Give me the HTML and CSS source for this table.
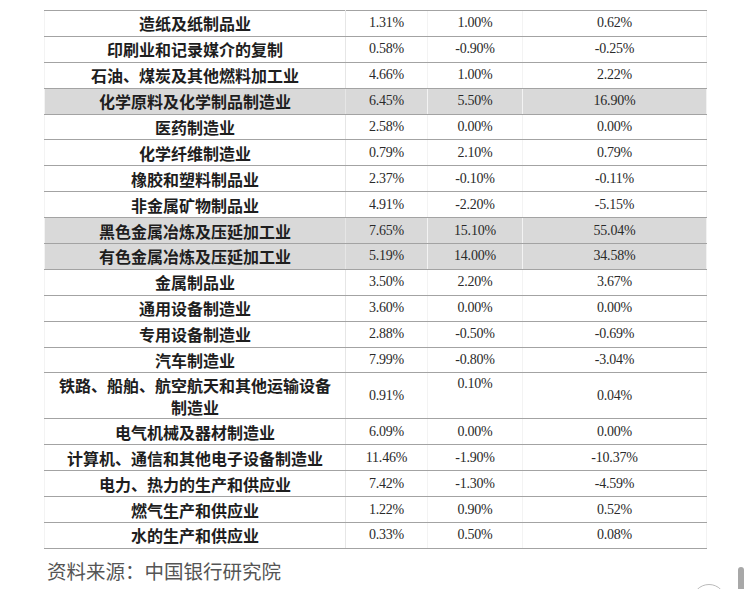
FILE: index.html
```html
<!DOCTYPE html>
<html lang="zh">
<head>
<meta charset="utf-8">
<link rel="stylesheet" href="styles.css">
</head>
<body>
<div class="page">
  <table class="data">
    <colgroup>
      <col class="c1"><col class="c2"><col class="c3"><col class="c4">
    </colgroup>
    <tbody>
      <tr><td class="name">造纸及纸制品业</td><td>1.31%</td><td>1.00%</td><td>0.62%</td></tr>
      <tr><td class="name">印刷业和记录媒介的复制</td><td>0.58%</td><td>-0.90%</td><td>-0.25%</td></tr>
      <tr><td class="name">石油、煤炭及其他燃料加工业</td><td>4.66%</td><td>1.00%</td><td>2.22%</td></tr>
      <tr class="hl"><td class="name">化学原料及化学制品制造业</td><td>6.45%</td><td>5.50%</td><td>16.90%</td></tr>
      <tr><td class="name">医药制造业</td><td>2.58%</td><td>0.00%</td><td>0.00%</td></tr>
      <tr><td class="name">化学纤维制造业</td><td>0.79%</td><td>2.10%</td><td>0.79%</td></tr>
      <tr><td class="name">橡胶和塑料制品业</td><td>2.37%</td><td>-0.10%</td><td>-0.11%</td></tr>
      <tr><td class="name">非金属矿物制品业</td><td>4.91%</td><td>-2.20%</td><td>-5.15%</td></tr>
      <tr class="hl"><td class="name">黑色金属冶炼及压延加工业</td><td>7.65%</td><td>15.10%</td><td>55.04%</td></tr>
      <tr class="hl"><td class="name">有色金属冶炼及压延加工业</td><td>5.19%</td><td>14.00%</td><td>34.58%</td></tr>
      <tr><td class="name">金属制品业</td><td>3.50%</td><td>2.20%</td><td>3.67%</td></tr>
      <tr><td class="name">通用设备制造业</td><td>3.60%</td><td>0.00%</td><td>0.00%</td></tr>
      <tr><td class="name">专用设备制造业</td><td>2.88%</td><td>-0.50%</td><td>-0.69%</td></tr>
      <tr><td class="name">汽车制造业</td><td>7.99%</td><td>-0.80%</td><td>-3.04%</td></tr>
      <tr class="tall"><td class="name">铁路、船舶、航空航天和其他运输设备<br>制造业</td><td>0.91%</td><td class="top">0.10%</td><td>0.04%</td></tr>
      <tr><td class="name">电气机械及器材制造业</td><td>6.09%</td><td>0.00%</td><td>0.00%</td></tr>
      <tr><td class="name">计算机、通信和其他电子设备制造业</td><td>11.46%</td><td>-1.90%</td><td>-10.37%</td></tr>
      <tr><td class="name">电力、热力的生产和供应业</td><td>7.42%</td><td>-1.30%</td><td>-4.59%</td></tr>
      <tr><td class="name">燃气生产和供应业</td><td>1.22%</td><td>0.90%</td><td>0.52%</td></tr>
      <tr><td class="name">水的生产和供应业</td><td>0.33%</td><td>0.50%</td><td>0.08%</td></tr>
    </tbody>
  </table>
  <p class="source">资料来源：中国银行研究院</p>
</div>
<div class="fab"></div>
<div class="scrollbar"></div>
</body>
</html>
```
FILE: styles.css
```css
html, body {
  margin: 0;
  padding: 0;
  background: #fff;
}
body {
  width: 750px;
  height: 589px;
  overflow: hidden;
  position: relative;
}
.page {
  padding: 10px 0 0 44px;
}
.data {
  border-collapse: collapse;
  width: 662px;
  table-layout: fixed;
  border-left: 1px solid #f2f2f2;
  border-right: 1px solid #f2f2f2;
}
.c1 { width: 301px; }
.c2 { width: 82px; }
.c3 { width: 95px; }
.c4 { width: 184px; }
.data tr {
  height: 25.9px;
}
.data tr.tall {
  height: 46px;
}
.data td {
  border-top: 1px solid #a3a3a3;
  border-bottom: 1px solid #a3a3a3;
  border-left: 1px solid #f3f3f3;
  padding: 0;
  text-align: center;
  vertical-align: middle;
  font-family: "Liberation Serif", "Times New Roman", serif;
  font-size: 14px;
  line-height: 18px;
  color: #2a2a2a;
  letter-spacing: -0.2px;
}
.data td.name {
  font-family: "Noto Sans CJK SC", "Noto Sans", sans-serif;
  font-weight: 700;
  font-size: 16px;
  line-height: 20px;
  color: #1e1e1e;
  letter-spacing: 0;
  border-right: 1px solid #e6e6e6;
}
.data tr.tall td.name {
  line-height: 22px;
}
.data td.top {
  vertical-align: top;
  padding-top: 2px;
}
.data tr.hl td {
  background: #d9d9d9;
}
.source {
  margin: 8px 0 0 3px;
  font-family: "Noto Sans CJK SC", "Noto Sans", sans-serif;
  font-size: 19.5px;
  line-height: 28px;
  color: #555;
  font-weight: 400;
}
.fab {
  position: absolute;
  left: 692px;
  top: 584px;
  width: 32px;
  height: 32px;
  border-radius: 50%;
  border: 1px solid #bbb;
  background: #fff;
}
.scrollbar {
  position: absolute;
  left: 738px;
  top: 567px;
  width: 6px;
  height: 26px;
  border-radius: 3px;
  background: #a8a8a8;
}
```
